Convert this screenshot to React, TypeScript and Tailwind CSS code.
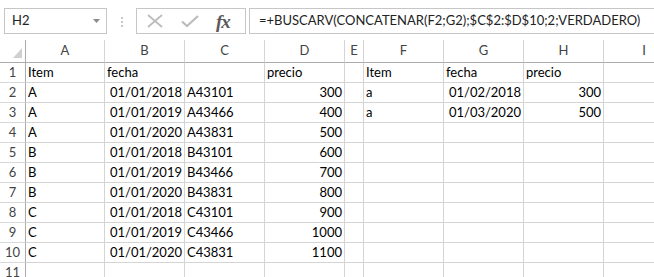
import React from "react"

const cols = ["A", "B", "C", "D", "E", "F", "G", "H", "I"]

type Cell = { v: string; r?: boolean }

const rows: Cell[][] = [
    [{ v: "Item" }, { v: "fecha" }, { v: "" }, { v: "precio" }, { v: "" }, { v: "Item" }, { v: "fecha" }, { v: "precio" }, { v: "" }],
    [{ v: "A" }, { v: "01/01/2018", r: true }, { v: "A43101" }, { v: "300", r: true }, { v: "" }, { v: "a" }, { v: "01/02/2018", r: true }, { v: "300", r: true }, { v: "" }],
    [{ v: "A" }, { v: "01/01/2019", r: true }, { v: "A43466" }, { v: "400", r: true }, { v: "" }, { v: "a" }, { v: "01/03/2020", r: true }, { v: "500", r: true }, { v: "" }],
    [{ v: "A" }, { v: "01/01/2020", r: true }, { v: "A43831" }, { v: "500", r: true }],
    [{ v: "B" }, { v: "01/01/2018", r: true }, { v: "B43101" }, { v: "600", r: true }],
    [{ v: "B" }, { v: "01/01/2019", r: true }, { v: "B43466" }, { v: "700", r: true }],
    [{ v: "B" }, { v: "01/01/2020", r: true }, { v: "B43831" }, { v: "800", r: true }],
    [{ v: "C" }, { v: "01/01/2018", r: true }, { v: "C43101" }, { v: "900", r: true }],
    [{ v: "C" }, { v: "01/01/2019", r: true }, { v: "C43466" }, { v: "1000", r: true }],
    [{ v: "C" }, { v: "01/01/2020", r: true }, { v: "C43831" }, { v: "1100", r: true }],
    [],
]

const gridCols = "grid grid-cols-[26px_79px_80px_80px_80px_19px_80px_80px_80px_80px]"

export default function App() {
    return (
        <div className="w-[654px] h-[277px] overflow-hidden bg-white font-['Lato',sans-serif] text-[13px] text-black">
            {/* Formula bar */}
            <div className="flex items-start h-[39px] pt-[8px]">
                <div className="ml-[4px] w-[103px] h-[26px] border border-[#c6c6c6] flex items-center justify-between pl-[7px] pr-[6px] text-[#222]">
                    <span>H2</span>
                    <svg width="7" height="4" viewBox="0 0 7 4">
                        <path d="M0 0h7L3.5 4z" fill="#8a8a8a" />
                    </svg>
                </div>
                <div className="ml-[14px] mt-[9px] flex flex-col gap-[2px]">
                    <span className="w-[2px] h-[2px] bg-[#c8c8c8]" />
                    <span className="w-[2px] h-[2px] bg-[#c8c8c8]" />
                    <span className="w-[2px] h-[2px] bg-[#c8c8c8]" />
                </div>
                <div className="ml-[13px] w-[110px] h-[26px] border border-[#c6c6c6] flex items-center">
                    <svg className="ml-[9px]" width="18" height="14" viewBox="0 0 18 14">
                        <path d="M2 1l14 12M16 1L2 13" stroke="#bcbcbc" strokeWidth="1.8" />
                    </svg>
                    <svg className="ml-[17px]" width="18" height="14" viewBox="0 0 18 14">
                        <path d="M1 7.5l5 4.5L17 2" stroke="#bcbcbc" strokeWidth="2.2" fill="none" />
                    </svg>
                    <span className="ml-[17px] font-['Liberation_Serif',serif] italic font-bold text-[19px] leading-none text-[#5a5a5a] tracking-[-1px]">fx</span>
                </div>
                <div className="ml-[3px] flex-1 h-[26px] border border-r-0 border-[#c6c6c6] flex items-center pl-[9px] text-[#222] text-[13px]">
                    =+BUSCARV(CONCATENAR(F2;G2);$C$2:$D$10;2;VERDADERO)
                </div>
            </div>

            {/* Sheet */}
            <div className="mt-[1px]">
                <div className={`${gridCols} h-[23px]`}>
                    <div className="border-r border-b border-[#ababab] relative">
                        <svg className="absolute right-[3px] bottom-[4px]" width="9" height="10" viewBox="0 0 9 10">
                            <path d="M9 0v10H0z" fill="#d0d0d0" />
                        </svg>
                    </div>
                    {cols.map((c, i) => (
                        <div
                            key={c}
                            className={`border-b border-[#ababab] flex items-center justify-center text-[#444] ${i < 8 ? "border-r border-r-[#d4d4d4]" : ""}`}
                        >
                            {c}
                        </div>
                    ))}
                </div>
                {rows.map((row, ri) => (
                    <div key={ri} className={`${gridCols} h-[20px]`}>
                        <div className="border-r border-r-[#ababab] border-b border-b-[#d8d8d8] flex items-end justify-center leading-[19px] text-[#444]">
                            {ri + 1}
                        </div>
                        {cols.map((c, ci) => {
                            const cell = row[ci]
                            return (
                                <div
                                    key={c}
                                    className={`border-r border-b border-[#d4d4d4] leading-[19px] whitespace-nowrap overflow-visible ${cell?.r ? "text-right pr-[2px]" : "pl-[2px]"}`}
                                >
                                    {cell?.v}
                                </div>
                            )
                        })}
                    </div>
                ))}
            </div>
        </div>
    )
}
